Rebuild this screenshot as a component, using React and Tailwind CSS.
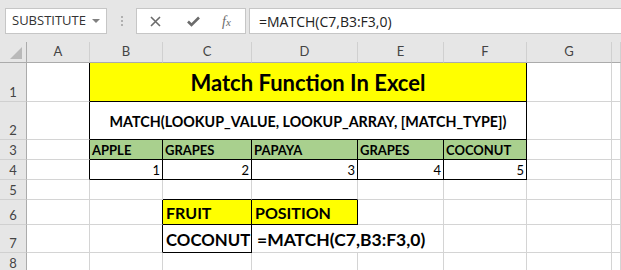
import React from 'react';

function Cell({ r, b, className = '', children }) {
  return (
    <div
      className={`border-r border-b ${r ? 'border-r-black' : 'border-r-[#d4d4d4]'} ${b ? 'border-b-black' : 'border-b-[#d4d4d4]'} ${className}`}
    >
      {children}
    </div>
  );
}

function RowHead({ n }) {
  return (
    <div className="flex items-end justify-center border-r border-b border-r-[#ababab] border-b-[#d0d0d0] bg-[#e6e6e6] pb-[1px] text-[13px] leading-[16px] text-[#444]">
      {n}
    </div>
  );
}

function ColHead({ label }) {
  return (
    <div className="flex items-center justify-center border-r border-b border-r-[#d0d0d0] border-b-[#ababab] bg-[#e6e6e6] text-[13px] text-[#444]">
      {label}
    </div>
  );
}

export default function App() {
  return (
    <div className="h-[270px] w-[621px] overflow-hidden bg-white font-['Open_Sans',sans-serif]">
      {/* formula bar */}
      <div className="flex h-[42px] items-start bg-[#e6e6e6] pt-[8px]">
        <div className="ml-[5px] flex h-[26px] w-[102px] items-center justify-between border border-[#c6c6c6] bg-white pl-[6px] pr-[6px]">
          <span className="text-[13px] text-[#333]">SUBSTITUTE</span>
          <svg width="8" height="5" viewBox="0 0 8 5">
            <path d="M0 0 L8 0 L4 4 Z" fill="#808080" />
          </svg>
        </div>
        <div className="ml-[14px] mt-[8px] flex flex-col gap-[2px]">
          <span className="h-[2px] w-[2px] bg-[#b0b0b0]" />
          <span className="h-[2px] w-[2px] bg-[#b0b0b0]" />
          <span className="h-[2px] w-[2px] bg-[#b0b0b0]" />
        </div>
        <div className="ml-[13px] flex h-[26px] w-[110px] items-center border border-[#c6c6c6] bg-white">
          <svg className="ml-[13px]" width="11" height="11" viewBox="0 0 11 11">
            <path d="M1 1 L10 10 M10 1 L1 10" stroke="#6b6b6b" strokeWidth="1.6" />
          </svg>
          <svg className="ml-[26px]" width="13" height="11" viewBox="0 0 13 11">
            <path d="M1 5.5 L4.5 9 L12 1.5" stroke="#6b6b6b" strokeWidth="2.6" fill="none" />
          </svg>
          <span className="ml-[22px] font-['Liberation_Serif',serif] text-[14px] italic text-[#6b6b6b]">
            f<span className="text-[11px]">x</span>
          </span>
        </div>
        <div className="ml-[3px] flex h-[26px] flex-1 items-center border border-r-0 border-[#c6c6c6] bg-white pl-[9px] text-[14px] text-[#222]">
          =MATCH(C7,B3:F3,0)
        </div>
      </div>

      {/* sheet */}
      <div className="grid grid-cols-[27px_63px_73px_89px_106px_86px_83px_85px_1fr] grid-rows-[21px_39px_38px_20px_20px_20px_25px_28px_20px] font-['Lato',sans-serif] text-black">
        <div className="relative border-r border-b border-r-[#ababab] border-b-[#ababab] bg-[#e6e6e6]">
          <svg className="absolute right-[4px] bottom-[3px]" width="12" height="12" viewBox="0 0 12 12">
            <path d="M12 0 L12 12 L0 12 Z" fill="#b9b9b9" />
          </svg>
        </div>
        {['A', 'B', 'C', 'D', 'E', 'F', 'G', ''].map((l, i) => (
          <ColHead key={i} label={l} />
        ))}

        {/* row 1 */}
        <RowHead n="1" />
        <Cell r />
        <Cell r b className="col-span-5 flex items-center justify-center bg-[#ffff00] text-[22px] font-bold">
          Match Function In Excel
        </Cell>
        <Cell />
        <Cell />

        {/* row 2 */}
        <RowHead n="2" />
        <Cell r />
        <Cell r b className="col-span-5 flex items-center justify-center bg-white pt-[2px] text-[14.3px] font-bold">
          MATCH(LOOKUP_VALUE, LOOKUP_ARRAY, [MATCH_TYPE])
        </Cell>
        <Cell />
        <Cell />

        {/* row 3 */}
        <RowHead n="3" />
        <Cell r />
        {['APPLE', 'GRAPES', 'PAPAYA', 'GRAPES', 'COCONUT'].map((f, i) => (
          <Cell key={i} r b className="flex items-end bg-[#a9d08e] pb-[1px] pl-[2px] text-[13px] leading-[16px] font-bold">
            {f}
          </Cell>
        ))}
        <Cell />
        <Cell />

        {/* row 4 */}
        <RowHead n="4" />
        <Cell r />
        {[1, 2, 3, 4, 5].map((n) => (
          <Cell key={n} r b className="flex items-end justify-end pb-[1px] pr-[2px] text-[13px] leading-[16px]">
            {n}
          </Cell>
        ))}
        <Cell />
        <Cell />

        {/* row 5 */}
        <RowHead n="5" />
        <Cell />
        <Cell />
        <Cell b />
        <Cell b />
        <Cell />
        <Cell />
        <Cell />
        <Cell />

        {/* row 6 */}
        <RowHead n="6" />
        <Cell />
        <Cell r />
        <Cell r b className="flex items-end bg-[#ffff00] pb-[1px] pl-[3px] text-[16px] leading-[20px] font-bold">
          FRUIT
        </Cell>
        <Cell r b className="flex items-end bg-[#ffff00] pb-[1px] pl-[3px] text-[16px] leading-[20px] font-bold">
          POSITION
        </Cell>
        <Cell />
        <Cell />
        <Cell />
        <Cell />

        {/* row 7 */}
        <RowHead n="7" />
        <Cell />
        <Cell r />
        <Cell r b className="flex items-end pb-[1px] pl-[3px] text-[16.8px] leading-[22px] font-bold">
          COCONUT
        </Cell>
        <div className="relative z-10 flex items-end whitespace-nowrap border-b border-b-[#d4d4d4] pb-[1px] pl-[5px] text-[17.5px] leading-[23px] font-bold">
          =MATCH(C7,B3:F3,0)
        </div>
        <Cell />
        <Cell />
        <Cell />
        <Cell />

        {/* row 8 */}
        <RowHead n="8" />
        <Cell />
        <Cell />
        <Cell />
        <Cell />
        <Cell />
        <Cell />
        <Cell />
        <Cell />
      </div>
    </div>
  );
}
